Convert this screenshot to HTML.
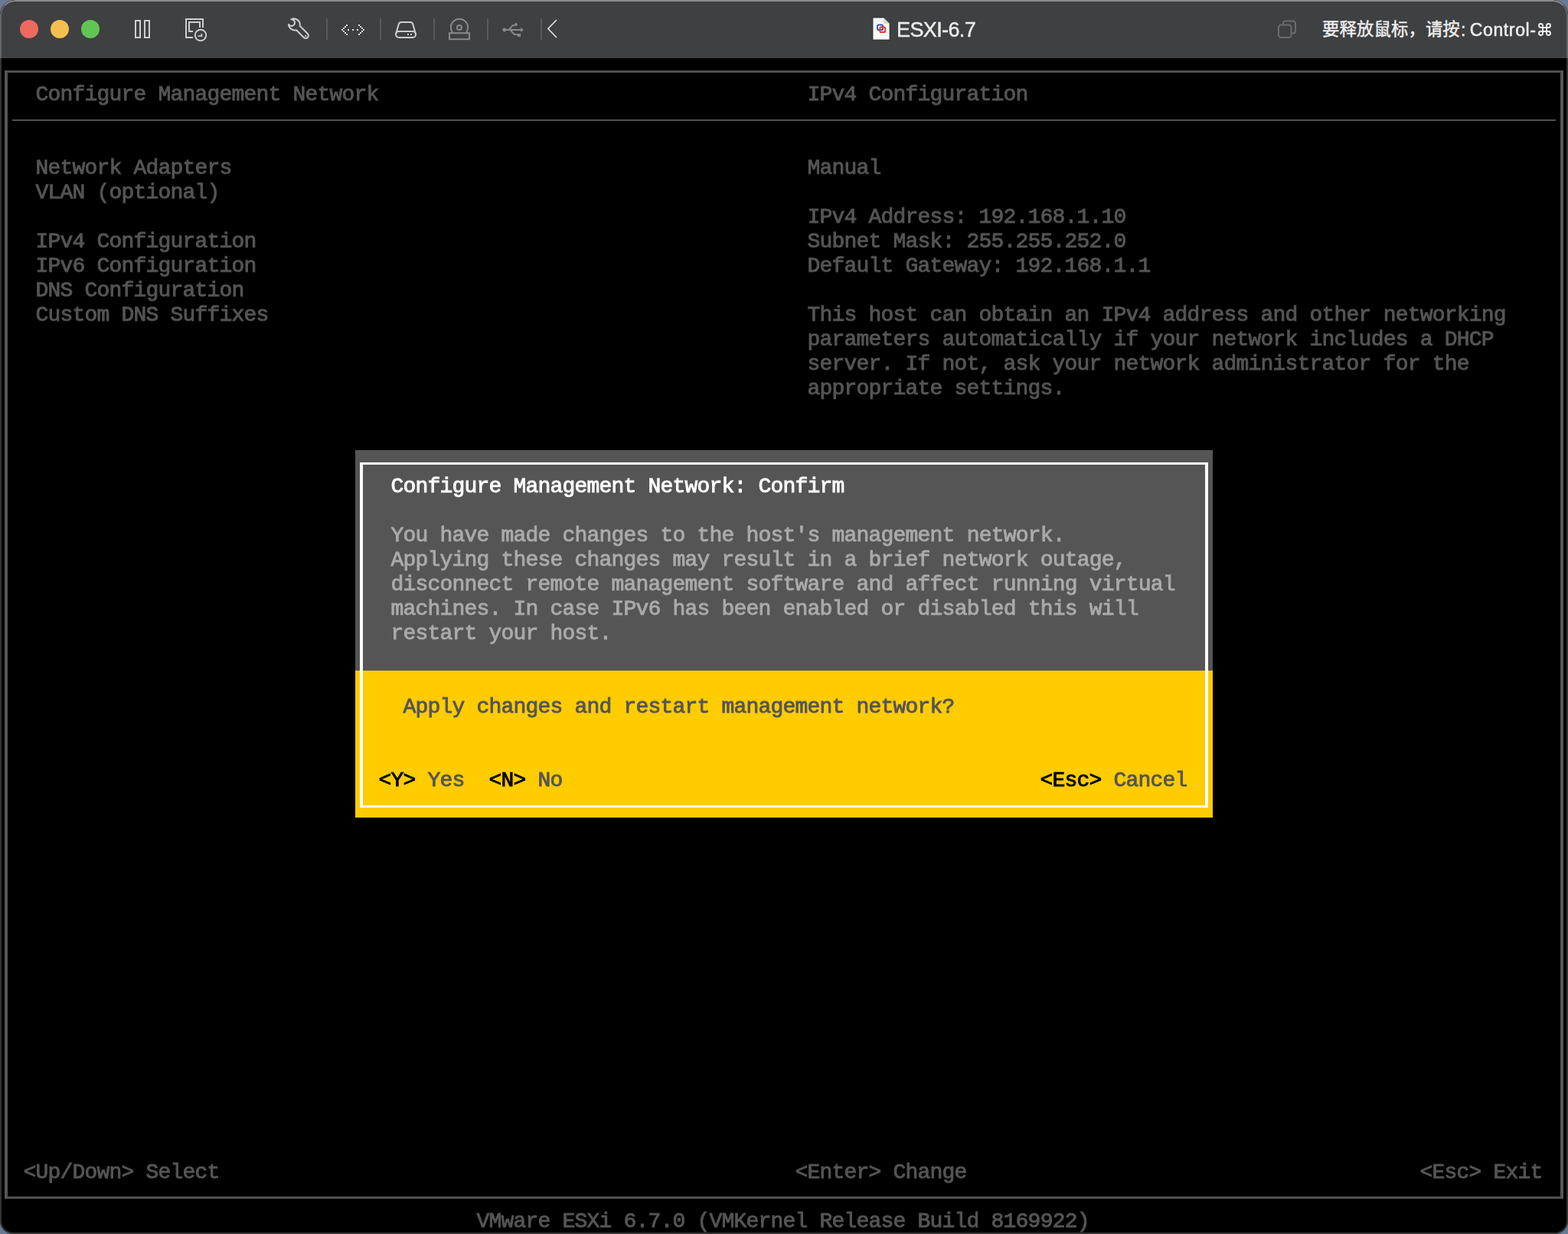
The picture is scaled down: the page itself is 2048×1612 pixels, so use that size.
<!DOCTYPE html>
<html lang="en">
<head>
<meta charset="utf-8">
<title>ESXI-6.7</title>
<style>
html,body{margin:0;padding:0}
body{width:2048px;height:1612px;overflow:hidden;position:relative;background:#6a7a94;font-family:"Liberation Sans",sans-serif}
#win{position:absolute;left:0;top:0;width:2048px;height:1612px;border-radius:20px 20px 17px 17px;overflow:hidden;background:#000}
#edge{position:absolute;left:0;top:0;width:2044px;height:1608px;border-radius:20px 20px 17px 17px;border:2px solid rgba(255,255,255,.2);border-top-color:rgba(255,255,255,.4);pointer-events:none;z-index:9}
#bar{position:absolute;left:0;top:0;width:2048px;height:76px;background:#3f4042}
.dot{position:absolute;top:26px;width:24px;height:24px;border-radius:50%}
.sep{position:absolute;top:24px;width:2px;height:28px;background:#58595c}
.ic{position:absolute;overflow:visible}
#title,#hint{will-change:transform;opacity:.999}
#title{position:absolute;left:1170.700px;top:21px;height:36px;line-height:36px;font-size:27px;letter-spacing:-.62px;color:#ececec;-webkit-text-stroke:.45px #ececec;white-space:nowrap}
#hint{position:absolute;left:1907.5px;top:21px;height:36px;line-height:36px;font-size:23px;letter-spacing:.65px;word-spacing:-2.400px;color:#f0f0f0;-webkit-text-stroke:.5px #f0f0f0;white-space:nowrap}
#scr{position:absolute;left:0;top:0;width:2048px;height:1612px;filter:blur(.4px)}
.ln{position:absolute;background:#555}
.t{position:absolute;height:32px;line-height:32px;white-space:pre;font-family:"Liberation Mono",monospace;font-size:28.0px;letter-spacing:-0.800px;font-weight:normal}
.t{-webkit-text-stroke:.9px currentColor}
.g{color:#555}
.w{color:#fff}
.l{color:#aaa}
.y{color:#555}
.k{color:#000}
#dlg{position:absolute;left:464px;top:588px;width:1120px;height:480px;background:#555}
#dlgy{position:absolute;left:464px;top:876px;width:1120px;height:192px;background:#ffcc00}
#dlgb{position:absolute;left:470px;top:604px;width:1100px;height:444.600px;border:solid #fff;border-width:3px 4px 3px 4px}
</style>
</head>
<body>
<div id="win">
<div id="bar">
<div class="dot" style="left:26px;background:#ed6a5e"></div>
<div class="dot" style="left:66px;background:#f5bf4f"></div>
<div class="dot" style="left:106px;background:#61c554"></div>

<!-- pause -->
<svg class="ic" style="left:170px;top:20px" width="32" height="36" viewBox="170 20 32 36" fill="none" stroke="#cecece" stroke-width="2">
<rect x="177" y="27" width="6" height="22"/><rect x="189" y="27" width="6" height="22"/>
</svg>
<!-- snapshot -->
<svg class="ic" style="left:236px;top:18px" width="40" height="40" viewBox="236 18 40 40" fill="none" stroke="#cecece" stroke-width="2">
<path d="M252 49H243V25H265V36"/><path d="M252 41H247V29H261V36"/>
<circle cx="262" cy="46" r="7.2"/><path d="M263.400 44V47.200H258.600" stroke-width="1.800"/>
</svg>
<!-- wrench -->
<svg class="ic" style="left:370px;top:18px" width="40" height="40" viewBox="370 18 40 40" fill="none" stroke="#cecece" stroke-width="2" stroke-linejoin="round" stroke-linecap="round">
<path d="M380.300 25.300A8 8 0 0 1 391.700 33.900L401.800 44A3.500 3.500 0 0 1 396.800 49L387 39.200A8 8 0 0 1 377 31.800A4.300 4.300 0 1 0 380.300 25.300Z"/>
<circle cx="399.200" cy="46.900" r="1.100" fill="#cecece" stroke="none"/>
</svg>
<div class="sep" style="left:426px"></div>
<!-- dotted arrows -->
<svg class="ic" style="left:440px;top:26px" width="42" height="26" viewBox="440 26 42 26" fill="#dcdcdc">
<g id="dots">
<rect x="446" y="38" width="2" height="2"/><rect x="448" y="36" width="2" height="2"/><rect x="450" y="34" width="2" height="2"/><rect x="452" y="32" width="2" height="2"/>
<rect x="448" y="40" width="2" height="2"/><rect x="450" y="42" width="2" height="2"/><rect x="452" y="44" width="2" height="2"/>
<rect x="454" y="38" width="2" height="2"/><rect x="460" y="38" width="2" height="2"/><rect x="466" y="38" width="2" height="2"/>
<rect x="474" y="38" width="2" height="2"/><rect x="472" y="36" width="2" height="2"/><rect x="470" y="34" width="2" height="2"/><rect x="468" y="32" width="2" height="2"/>
<rect x="472" y="40" width="2" height="2"/><rect x="470" y="42" width="2" height="2"/><rect x="468" y="44" width="2" height="2"/>
</g>
</svg>
<div class="sep" style="left:496px"></div>
<!-- disk -->
<svg class="ic" style="left:510px;top:22px" width="40" height="34" viewBox="510 22 40 34" fill="none" stroke="#cecece" stroke-width="2" stroke-linejoin="round">
<path d="M517 44.500l3.800-13c.5-1.600 1.600-2.500 3.200-2.500h12c1.600 0 2.700 .9 3.200 2.500l3.800 13"/>
<rect x="517" y="41" width="26" height="8" rx="4"/>
<rect x="532" y="44" width="2" height="2" fill="#cecece" stroke="none"/><rect x="536" y="44" width="2" height="2" fill="#cecece" stroke="none"/>
</svg>
<div class="sep" style="left:566px"></div>
<!-- cd -->
<svg class="ic" style="left:580px;top:20px" width="40" height="38" viewBox="580 20 40 38" fill="none" stroke="#88898a" stroke-width="2">
<path d="M591 42.600A11.200 11.200 0 1 1 609 42.600"/>
<circle cx="600" cy="35.900" r="3"/>
<rect x="587" y="43.200" width="26" height="8"/>
</svg>
<div class="sep" style="left:636px"></div>
<!-- usb -->
<svg class="ic" style="left:650px;top:24px" width="40" height="30" viewBox="650 24 40 30" fill="none" stroke="#88898a" stroke-width="2" stroke-linejoin="miter">
<path d="M659 39H681"/><path d="M664.400 39.200L669.800 33.200H673"/><path d="M666.400 38.800L671.800 45H677"/>
<circle cx="658.800" cy="39" r="2.450" fill="#88898a" stroke="none"/>
<circle cx="674.050" cy="31.900" r="1.950" fill="#88898a" stroke="none"/>
<rect x="676" y="44.100" width="4.100" height="4" fill="#88898a" stroke="none"/>
<path d="M680.200 35.900L683.900 39L680.200 42.100z" fill="#88898a" stroke="none"/>
</svg>
<div class="sep" style="left:706px"></div>
<!-- chevron -->
<svg class="ic" style="left:710px;top:22px" width="24" height="32" viewBox="710 22 24 32" fill="none" stroke="#e4e4e4" stroke-width="1.600">
<path d="M727 26L715.800 37.500L727 49"/>
</svg>

<!-- document icon -->
<svg class="ic" style="left:1136px;top:20px" width="30" height="36" viewBox="1136 20 30 36">
<defs><linearGradient id="dg" x1="0" y1="0" x2="0" y2="1"><stop offset="0" stop-color="#f2f2f2"/><stop offset="1" stop-color="#fdfdfd"/></linearGradient></defs>
<path d="M1140 23h14l8 8v21h-22z" fill="url(#dg)" stroke="#2a2a2a" stroke-width=".8"/>
<path d="M1154 23v8h8z" fill="#d9d9d9"/>
<rect x="1146" y="32.500" width="7" height="6.500" rx="1.600" fill="none" stroke="#2b5cb3" stroke-width="1.900"/>
<rect x="1149.200" y="35.500" width="7" height="6.500" rx="1.600" fill="none" stroke="#e8341f" stroke-width="1.900"/>
</svg>
<div id="title">ESXI-6.7</div>

<!-- overlapping squares -->
<svg class="ic" style="left:1664px;top:22px" width="34" height="32" viewBox="1664 22 34 32" fill="none" stroke="#6a6b6d" stroke-width="2">
<rect x="1670" y="32.500" width="16.500" height="16.500" rx="3.500"/>
<path d="M1676 32.500V31c0-2 1.500-3.500 3.500-3.500h9c2 0 3.500 1.500 3.500 3.500v9c0 2-1.500 3.500-3.500 3.500h-2"/>
</svg>
<!-- CJK hint text -->
<svg class="ic" style="left:1727px;top:25.300px" width="180" height="32" viewBox="0 -920 8036 1429" fill="#f0f0f0" role="img" aria-label="要释放鼠标，请按">
<text x="0" y="0" font-size="1000" letter-spacing="4.5" fill="#f0f0f0" stroke="#f0f0f0" stroke-width="18" font-family="&quot;Liberation Sans&quot;, &quot;Noto Sans CJK SC&quot;, sans-serif">要释放鼠标，请按</text>
</svg>
<div id="hint">: Control-</div>
<svg class="ic" style="left:2008.8px;top:29.6px" width="17" height="17" viewBox="0 0 17 17" fill="none" stroke="#f0f0f0" stroke-width="1.9" role="img" aria-label="Command">
<path d="M6 6H11V11H6ZM6 6V3.5A2.5 2.5 0 1 0 3.5 6H6M11 6V3.5A2.5 2.5 0 1 1 13.5 6H11M6 11V13.5A2.5 2.5 0 1 1 3.5 11H6M11 11V13.5A2.5 2.5 0 1 0 13.5 11H11"/>
</svg>
</div>

<div id="scr">
<div class="ln" style="left:6px;top:92px;width:2036px;height:2.700px;background:#505050"></div>
<div class="ln" style="left:6px;top:1563.300px;width:2036px;height:2.700px;background:#505050"></div>
<div class="ln" style="left:6px;top:92px;width:4px;height:1474px"></div>
<div class="ln" style="left:2038px;top:92px;width:4px;height:1474px"></div>
<div class="ln" style="left:16px;top:155.700px;width:2016px;height:2.700px;background:#505050"></div>
<div class="t g" style="left:46.5px;top:108px">Configure Management Network</div>
<div class="t g" style="left:1054.5px;top:108px">IPv4 Configuration</div>
<div class="t g" style="left:46.5px;top:204px">Network Adapters</div>
<div class="t g" style="left:1054.5px;top:204px">Manual</div>
<div class="t g" style="left:46.5px;top:236px">VLAN (optional)</div>
<div class="t g" style="left:1054.5px;top:268px">IPv4 Address: 192.168.1.10</div>
<div class="t g" style="left:46.5px;top:300px">IPv4 Configuration</div>
<div class="t g" style="left:1054.5px;top:300px">Subnet Mask: 255.255.252.0</div>
<div class="t g" style="left:46.5px;top:332px">IPv6 Configuration</div>
<div class="t g" style="left:1054.5px;top:332px">Default Gateway: 192.168.1.1</div>
<div class="t g" style="left:46.5px;top:364px">DNS Configuration</div>
<div class="t g" style="left:46.5px;top:396px">Custom DNS Suffixes</div>
<div class="t g" style="left:1054.5px;top:396px">This host can obtain an IPv4 address and other networking</div>
<div class="t g" style="left:1054.5px;top:428px">parameters automatically if your network includes a DHCP</div>
<div class="t g" style="left:1054.5px;top:460px">server. If not, ask your network administrator for the</div>
<div class="t g" style="left:1054.5px;top:492px">appropriate settings.</div>
<div class="t g" style="left:30.5px;top:1516px">&lt;Up/Down&gt; Select</div>
<div class="t g" style="left:1038.5px;top:1516px">&lt;Enter&gt; Change</div>
<div class="t g" style="left:1854.5px;top:1516px">&lt;Esc&gt; Exit</div>
<div class="t g" style="left:622.5px;top:1580px">VMware ESXi 6.7.0 (VMKernel Release Build 8169922)</div>
<div id="dlg"></div>
<div id="dlgy"></div>
<div id="dlgb"></div>
<div class="t w" style="left:510.5px;top:620px">Configure Management Network: Confirm</div>
<div class="t l" style="left:510.5px;top:684px">You have made changes to the host's management network.</div>
<div class="t l" style="left:510.5px;top:716px">Applying these changes may result in a brief network outage,</div>
<div class="t l" style="left:510.5px;top:748px">disconnect remote management software and affect running virtual</div>
<div class="t l" style="left:510.5px;top:780px">machines. In case IPv6 has been enabled or disabled this will</div>
<div class="t l" style="left:510.5px;top:812px">restart your host.</div>
<div class="t y" style="left:526.5px;top:908px">Apply changes and restart management network?</div>
<div class="t k" style="left:494.5px;top:1004px">&lt;Y&gt;</div>
<div class="t y" style="left:558.5px;top:1004px">Yes</div>
<div class="t k" style="left:638.5px;top:1004px">&lt;N&gt;</div>
<div class="t y" style="left:702.5px;top:1004px">No</div>
<div class="t k" style="left:1358.5px;top:1004px">&lt;Esc&gt;</div>
<div class="t y" style="left:1454.5px;top:1004px">Cancel</div>
</div>
<div id="edge"></div>
</div>
</body>
</html>
